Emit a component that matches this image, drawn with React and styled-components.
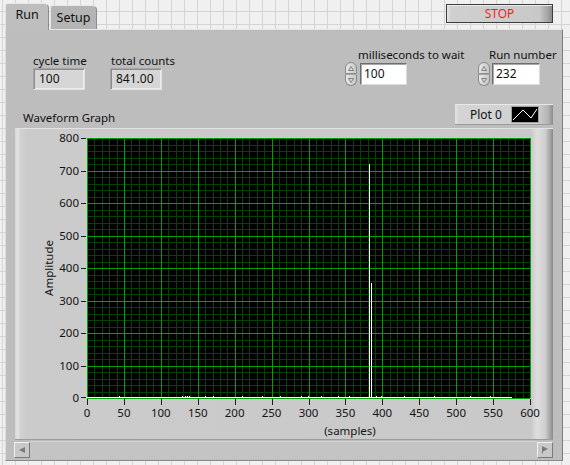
import React from 'react';
import styled, { createGlobalStyle } from 'styled-components';

const FONT = `"Noto Sans", "Open Sans", "Liberation Sans", sans-serif`;

const GlobalStyle = createGlobalStyle`
  html, body { margin: 0; padding: 0; }
  body {
    width: 570px;
    height: 465px;
    overflow: hidden;
    background-color: #f0f0f0;
    background-image:
      linear-gradient(to right, #d4d4d4 1px, transparent 1px),
      linear-gradient(to bottom, #d4d4d4 1px, transparent 1px);
    background-size: 13px 13px;
    background-position: 2px 11px;
    font-family: ${FONT};
  }
`;

const Page = styled.div`
  box-sizing: border-box;
  width: 570px;
  height: 465px;
  padding: 3px 7px 4px 5px;
  display: flex;
  flex-direction: column;
`;

const TabRow = styled.div`
  display: flex;
  align-items: flex-end;
  height: 26px;
  position: relative;
  z-index: 1;
`;

const Tab = styled.div`
  box-sizing: border-box;
  width: ${(p) => p.$w}px;
  height: ${(p) => (p.$active ? 27 : 24)}px;
  margin-bottom: ${(p) => (p.$active ? -1 : 0)}px;
  margin-right: 1px;
  background: ${(p) => (p.$active ? '#bebebe' : '#b4b4b4')};
  border: 1px solid #8c8c8c;
  border-bottom: none;
  border-top-color: #e8e8e8;
  border-left-color: #e4e4e4;
  border-radius: 3px 5px 0 0;
  display: flex;
  align-items: center;
  justify-content: center;
  padding-bottom: ${(p) => (p.$active ? 5 : 1)}px;
  font-size: 12.5px;
  color: #111;
`;

const StopButton = styled.div`
  box-sizing: border-box;
  align-self: flex-start;
  margin: 1px 10px 0 auto;
  width: 107px;
  height: 19px;
  border: 1px solid #3c3c3c;
  background: linear-gradient(to right, #e6e6e6 0, #d0d0d0 4px, #c8c8c8 88%, #a4a4a4 96%, #8a8a8a 100%);
  box-shadow: inset 0 1px 0 #ececec;
  display: flex;
  align-items: center;
  justify-content: center;
  color: #ff1a1a;
  font-size: 12px;
`;

const Panel = styled.div`
  box-sizing: border-box;
  width: 558px;
  height: 432px;
  background: #bdbdbd;
  border: 1px solid;
  border-color: #e4e4e4 #7c7c7c #8a8a8a #dcdcdc;
  display: flex;
  flex-direction: column;
`;

const ControlsRow = styled.div`
  display: flex;
  align-items: flex-start;
  height: 74px;
  padding-left: 27px;
`;

const Group = styled.div`
  display: flex;
  flex-direction: column;
  width: ${(p) => (p.$w ? `${p.$w}px` : 'auto')};
  margin-top: ${(p) => p.$mt}px;
`;

const Label = styled.div`
  font-size: 11.5px;
  line-height: 14px;
  height: 14px;
  padding-left: ${(p) => p.$pl || 0}px;
  white-space: nowrap;
  color: #111;
`;

const Indicator = styled.div`
  box-sizing: border-box;
  width: 52px;
  height: 22px;
  border: 1px solid;
  border-color: #a4a4a4 #e2e2e2 #e2e2e2 #a4a4a4;
  box-shadow: inset 1px 1px 0 #8c8c8c, inset -1px -1px 0 #ececec;
  background: #d6d6d6;
  font-size: 12px;
  line-height: 20px;
  padding-left: 5px;
  color: #111;
`;

const NumRow = styled.div`
  display: flex;
  align-items: flex-start;
  gap: ${(p) => p.$gap}px;
`;

const Spin = styled.div`
  display: flex;
  flex-direction: column;
  width: 12px;
  height: 24px;
`;

const SpinHalf = styled.div`
  box-sizing: border-box;
  height: 12px;
  border: 1px solid #8a8a8a;
  ${(p) => (p.$down ? 'border-top-color: #a8a8a8;' : '')}
  border-radius: ${(p) => (p.$down ? '1px 1px 6px 6px' : '6px 6px 1px 1px')};
  background: linear-gradient(to right, #e8e8e8, #c8c8c8);
  display: flex;
  align-items: center;
  justify-content: center;
`;

const Field = styled.div`
  box-sizing: border-box;
  margin-top: 1px;
  width: ${(p) => p.$w}px;
  height: 22px;
  background: #fff;
  border: 1px solid;
  border-color: #6e6e6e #dcdcdc #dcdcdc #6e6e6e;
  box-shadow: inset 1px 1px 0 #a8a8a8;
  padding-left: 3px;
  font-size: 12px;
  line-height: 20px;
  color: #111;
`;

const GraphHeader = styled.div`
  display: flex;
  align-items: flex-end;
  justify-content: space-between;
  height: 24px;
  width: 538px;
  margin-left: 9px;
`;

const GraphLabel = styled.div`
  font-size: 11.5px;
  line-height: 15px;
  margin: 0 0 3px 8px;
  color: #111;
`;

const Legend = styled.div`
  box-sizing: border-box;
  width: 98px;
  height: 21px;
  margin-bottom: 3px;
  display: flex;
  align-items: center;
  padding-left: 15px;
  background: linear-gradient(to right, #e4e4e4 0, #d4d4d4 4px, #d0d0d0 84%, #b4b4b4 95%, #8c8c8c 100%);
  border-top: 1px solid #e8e8e8;
  border-bottom: 1px solid #9a9a9a;
  font-size: 12px;
  color: #111;
`;

const Swatch = styled.div`
  box-sizing: border-box;
  margin: 0 14px 0 auto;
  width: 28px;
  height: 17px;
  background: #000;
  border: 1px solid #a0a0a0;
  display: flex;
`;

const Frame = styled.div`
  width: 538px;
  height: 312px;
  margin-left: 9px;
  background: linear-gradient(
    to right,
    #d6d6d6 0,
    #e4e4e4 3px,
    #d2d2d2 5px,
    #cbcbcb 11px,
    #c9c9c9 516px,
    #dedede 522px,
    #d0d0d0 530px,
    #a6a6a6 535px,
    #8a8a8a 538px
  );
  box-shadow: inset 0 1px 0 #e2e2e2, inset 0 -1px 0 #9c9c9c;
  svg { display: block; }
`;

const ScrollRow = styled.div`
  box-sizing: border-box;
  height: 20px;
  display: flex;
  align-items: center;
  padding: 0 9px 0 8px;
`;

const ScrollButton = styled.div`
  box-sizing: border-box;
  width: 16px;
  height: 16px;
  border: 1px solid;
  border-color: #f2f2f2 #7a7a7a #7a7a7a #f2f2f2;
  background: #c8c8c8;
  display: flex;
  align-items: center;
  justify-content: center;
`;

const Track = styled.div`
  flex: 1;
  height: 18px;
  background: #c4c4c4;
  border-top: 1px solid #d4d4d4;
  box-sizing: border-box;
`;

const SpinButtons = () => (
  <Spin>
    <SpinHalf>
      <svg width="6" height="5" viewBox="0 0 6 5">
        <polygon points="3,0.5 5.5,4.5 0.5,4.5" fill="#dcdcdc" stroke="#6a6a6a" strokeWidth="0.8" />
      </svg>
    </SpinHalf>
    <SpinHalf $down>
      <svg width="6" height="5" viewBox="0 0 6 5">
        <polygon points="0.5,0.5 5.5,0.5 3,4.5" fill="#dcdcdc" stroke="#6a6a6a" strokeWidth="0.8" />
      </svg>
    </SpinHalf>
  </Spin>
);

// Waveform graph drawing
const W = 538;
const H = 312;
const X0 = 72;
const X1 = 515;
const Y0 = 10;
const Y1 = 270;
const sx = (s) => X0 + (s * (X1 - X0)) / 600;
const sy = (v) => Y1 - (v * (Y1 - Y0)) / 800;
const crisp = (n) => Math.round(n) + 0.5;

const buildData = () => {
  const data = new Array(577).fill(0);
  const blips = { 44: 3, 130: 3, 133: 3, 136: 2, 139: 3, 160: 2, 172: 2, 210: 2, 238: 3, 262: 2, 290: 3, 300: 2, 318: 3, 341: 2, 355: 3, 392: 3, 399: 2, 430: 3, 470: 2, 520: 2, 546: 3 };
  Object.keys(blips).forEach((k) => (data[k] = blips[k]));
  data[383] = 720;
  data[386] = 355;
  return data;
};
const DATA = buildData();
const BASE_Y = Y1 - 0.5;
const spikes = DATA.map((v, i) => ({ v, i })).filter((d) => d.v > 0);
const spikeTop = (v) => Math.min(Math.round(sy(v)) - 0.5, BASE_Y - 2);

const WaveformGraph = () => {
  const minorV = [];
  const majorV = [];
  for (let i = 0; i <= 60; i++) {
    const x = crisp(sx(i * 10));
    (i % 5 === 0 ? majorV : minorV).push(x);
  }
  const minorH = [];
  const majorH = [];
  for (let j = 0; j <= 40; j++) {
    const y = crisp(sy(j * 20));
    (j % 5 === 0 ? majorH : minorH).push(y);
  }
  const xTicks = [];
  for (let s = 0; s <= 600; s += 50) xTicks.push(s);
  const yTicks = [];
  for (let v = 0; v <= 800; v += 100) yTicks.push(v);
  const textStyle = { fontFamily: FONT, fontSize: '11.5px', fill: '#141414' };

  return (
    <svg width={W} height={H} viewBox={`0 0 ${W} ${H}`}>
      <rect x={X0} y={Y0} width={X1 - X0} height={Y1 - Y0} fill="#000" />
      <g shapeRendering="crispEdges" strokeWidth="1">
        {minorV.map((x) => (
          <line key={`mv${x}`} x1={x} y1={Y0} x2={x} y2={Y1} stroke="#004400" />
        ))}
        {minorH.map((y) => (
          <line key={`mh${y}`} x1={X0} y1={y} x2={X1} y2={y} stroke="#004400" />
        ))}
        {majorV.map((x) => (
          <line key={`Mv${x}`} x1={x} y1={Y0} x2={x} y2={Y1} stroke="#00a000" />
        ))}
        {majorH.map((y) => (
          <line key={`Mh${y}`} x1={X0} y1={y} x2={X1} y2={y} stroke="#00a000" />
        ))}
      </g>
      <g shapeRendering="crispEdges" stroke="#ffffff" strokeWidth="1">
        <line x1={X0} y1={BASE_Y} x2={Math.round(sx(576))} y2={BASE_Y} />
        {spikes.map(({ v, i }) => (
          <line
            key={`sp${i}`}
            x1={Math.floor(sx(i)) + 0.5}
            y1={BASE_Y}
            x2={Math.floor(sx(i)) + 0.5}
            y2={spikeTop(v)}
          />
        ))}
      </g>
      <g shapeRendering="crispEdges" stroke="#1e1e1e" strokeWidth="1">
        {xTicks.map((s) => (
          <line key={`xt${s}`} x1={crisp(sx(s))} y1={Y1 + 1} x2={crisp(sx(s))} y2={Y1 + 7} />
        ))}
        {yTicks.map((v) => (
          <line
            key={`yt${v}`}
            x1={X0 - 6}
            y1={crisp(sy(v)) - (v === 0 ? 1 : 0)}
            x2={X0 - 1}
            y2={crisp(sy(v)) - (v === 0 ? 1 : 0)}
          />
        ))}
      </g>
      {xTicks.map((s) => (
        <text key={`xl${s}`} x={sx(s)} y={289} textAnchor="middle" style={textStyle}>
          {s}
        </text>
      ))}
      {yTicks.map((v) => (
        <text key={`yl${v}`} x={X0 - 8} y={sy(v) + 4} textAnchor="end" style={textStyle}>
          {v}
        </text>
      ))}
      <text x={335} y={306.5} textAnchor="middle" style={textStyle}>
        (samples)
      </text>
      <text transform="translate(38 140) rotate(-90)" x={0} y={0} textAnchor="middle" style={textStyle}>
        Amplitude
      </text>
    </svg>
  );
};

export default function App() {
  return (
    <>
      <GlobalStyle />
      <Page>
        <TabRow>
          <Tab $active $w={44}>Run</Tab>
          <Tab $w={47}>Setup</Tab>
          <StopButton>STOP</StopButton>
        </TabRow>
        <Panel>
          <ControlsRow>
            <Group $w={77} $mt={24}>
              <Label>cycle time</Label>
              <Indicator>100</Indicator>
            </Group>
            <Group $w={235} $mt={24}>
              <Label $pl={1}>total counts</Label>
              <Indicator>841.00</Indicator>
            </Group>
            <Group $w={133} $mt={18}>
              <Label $pl={13}>milliseconds to wait</Label>
              <NumRow $gap={3}>
                <SpinButtons />
                <Field $w={47}>100</Field>
              </NumRow>
            </Group>
            <Group $mt={18}>
              <Label $pl={11}>Run number</Label>
              <NumRow $gap={2}>
                <SpinButtons />
                <Field $w={48}>232</Field>
              </NumRow>
            </Group>
          </ControlsRow>
          <GraphHeader>
            <GraphLabel>Waveform Graph</GraphLabel>
            <Legend>
              Plot 0
              <Swatch>
                <svg width="26" height="15" viewBox="0 0 26 15">
                  <polyline points="1,13 11,3 19,11 25,2" fill="none" stroke="#fff" strokeWidth="1" />
                </svg>
              </Swatch>
            </Legend>
          </GraphHeader>
          <Frame>
            <WaveformGraph />
          </Frame>
          <ScrollRow>
            <ScrollButton>
              <svg width="8" height="8" viewBox="0 0 8 8">
                <polygon points="1,4 7,1 7,7" fill="#7a7a7a" />
              </svg>
            </ScrollButton>
            <Track />
            <ScrollButton>
              <svg width="8" height="8" viewBox="0 0 8 8">
                <line x1="1.5" y1="0.5" x2="1.5" y2="7.5" stroke="#7a7a7a" strokeWidth="1" />
                <polygon points="2,0.5 7,3 2,5.5" fill="#7a7a7a" />
              </svg>
            </ScrollButton>
          </ScrollRow>
        </Panel>
      </Page>
    </>
  );
}
